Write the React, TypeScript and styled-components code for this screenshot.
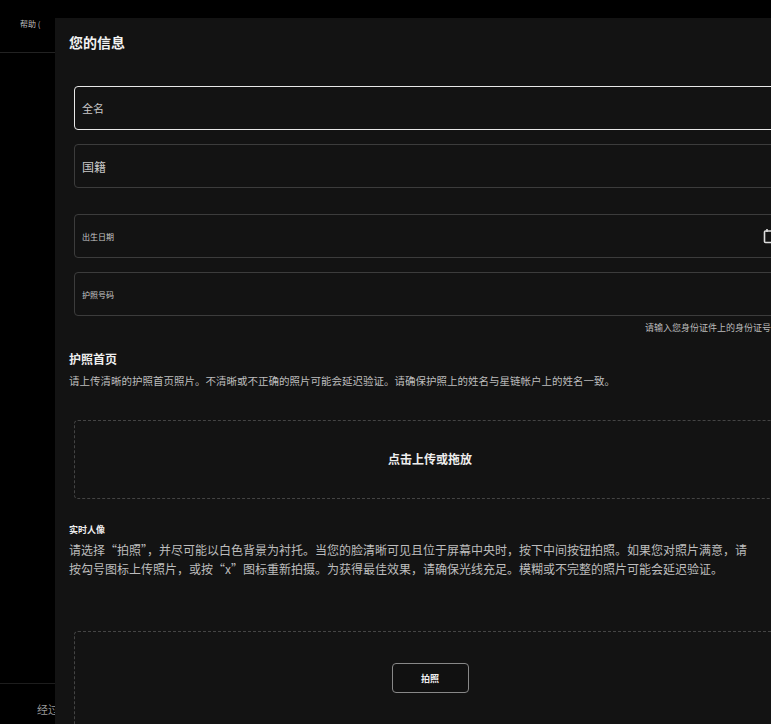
import React from "react";
import styled, { createGlobalStyle } from "styled-components";

const Global = createGlobalStyle`
  html, body { margin: 0; padding: 0; background: #000; overflow: hidden; }
  body { font-family: "Noto Sans CJK SC", "Noto Sans", sans-serif; color: #eee; width: 771px; height: 724px; }
`;

const Page = styled.div`
  position: relative; width: 771px; height: 724px; overflow: hidden; background: #000;
`;
const SideTop = styled.div`
  height: 53px; border-bottom: 1px solid #222; box-sizing: border-box;
  padding: 18px 0 0 20px; font-size: 8px; color: #bbb;
`;
const SideBottom = styled.div`
  position: absolute; left: 0; right: 0; top: 683px; border-top: 1px solid #1d1d1d;
  padding: 17px 0 0 37px; font-size: 11px; color: #999;
`;
const Modal = styled.div`
  position: absolute; left: 55px; top: 18px; width: 750px; height: 720px;
  background: #131313; box-sizing: border-box; padding: 14px 19px 0 14px;
`;
const Title = styled.h2`
  margin: 0; font-size: 14px; font-weight: 700; color: #f2f2f2; line-height: 20px;
`;
const Form = styled.div<{ $mt: number }>`
  margin-top: ${p => p.$mt}px; margin-left: 5px; display: flex; flex-direction: column; width: 712px;
`;
const Field = styled.div<{ $active?: boolean; $mt?: number }>`
  height: 44px; box-sizing: border-box; margin-top: ${p => p.$mt ?? 0}px;
  border: 1px solid ${p => (p.$active ? "#e8e8e8" : "#3c3c3c")};
  border-radius: 4px; display: flex; align-items: center; justify-content: space-between;
  padding: 0 8px 0 7px;
`;
const Label = styled.span<{ $size: number }>`
  font-size: ${p => p.$size}px; color: #c8c8c8;
`;
const Helper = styled.div`
  font-size: 9px; color: #bbb; text-align: right; padding-right: 15px; margin-top: 5px;
`;
const SectionTitle = styled.div<{ $size: number; $mt: number }>`
  font-size: ${p => p.$size}px; font-weight: 700; color: #eee; margin-top: ${p => p.$mt}px; margin-left: -5px;
`;
const Desc = styled.p<{ $size: number }>`
  margin: 4px 0 0 -5px; max-width: 680px; font-size: ${p => p.$size}px; line-height: 19px; color: #bdbdbd;
`;
const Drop = styled.div<{ $mt: number; $h: number }>`
  margin-top: ${p => p.$mt}px; height: ${p => p.$h}px; border: 1px dashed #444; border-radius: 4px;
  display: flex; justify-content: center; align-items: flex-start;
`;
const DropText = styled.span`
  font-size: 12px; font-weight: 700; color: #eee; margin-top: 29px;
`;
const Btn = styled.button`
  margin-top: 31px; width: 77px; height: 30px; background: #111; border: 1px solid #888;
  border-radius: 4px; color: #eee; font-size: 9px; font-weight: 700;
  font-family: "Noto Sans CJK SC", sans-serif;
`;

const Cal = () => (
  <svg width="14" height="16" viewBox="0 0 14 16" fill="none" stroke="#ddd" strokeWidth="1.6">
    <rect x="1.5" y="3" width="11" height="11.5" rx="1" />
    <path d="M4 1v3M10 1v3" />
  </svg>
);

export default function App() {
  return (
    <Page>
      <Global />
      <SideTop>帮助 (</SideTop>
      <SideBottom>经过</SideBottom>
      <Modal>
        <Title>您的信息</Title>
        <Form $mt={34}>
          <Field $active><Label $size={11}>全名</Label></Field>
          <Field $mt={14}><Label $size={12}>国籍</Label></Field>
          <Field $mt={26}><Label $size={8}>出生日期</Label><Cal /></Field>
          <Field $mt={14}><Label $size={8}>护照号码</Label></Field>
          <Helper>请输入您身份证件上的身份证号</Helper>
          <SectionTitle $size={12} $mt={16}>护照首页</SectionTitle>
          <Desc $size={10.5}>请上传清晰的护照首页照片。不清晰或不正确的照片可能会延迟验证。请确保护照上的姓名与星链帐户上的姓名一致。</Desc>
          <Drop $mt={30} $h={77}><DropText>点击上传或拖放</DropText></Drop>
          <SectionTitle $size={9} $mt={24}>实时人像</SectionTitle>
          <Desc $size={12}>请选择“拍照”，并尽可能以白色背景为衬托。当您的脸清晰可见且位于屏幕中央时，按下中间按钮拍照。如果您对照片满意，请按勾号图标上传照片，或按“x”图标重新拍摄。为获得最佳效果，请确保光线充足。模糊或不完整的照片可能会延迟验证。</Desc>
          <Drop $mt={53} $h={120}><Btn>拍照</Btn></Drop>
        </Form>
      </Modal>
    </Page>
  );
}
